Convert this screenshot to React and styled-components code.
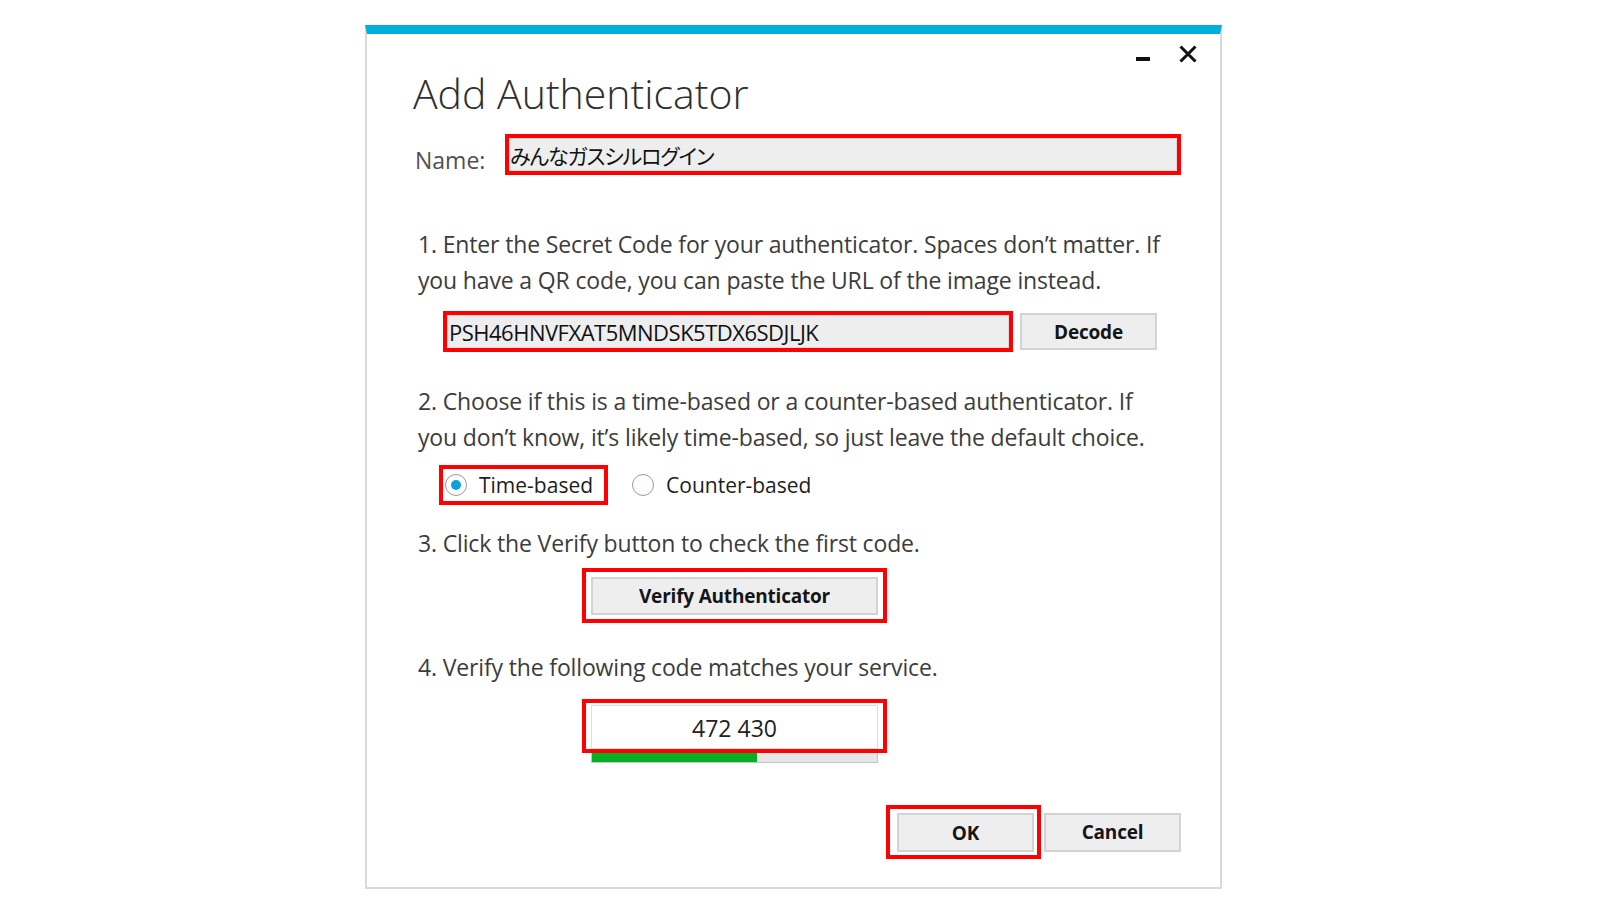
import React from 'react';
import styled, { createGlobalStyle } from 'styled-components';

const GlobalStyle = createGlobalStyle`
  html, body { margin: 0; padding: 0; background: #ffffff; }
  body { font-family: "Open Sans", "Noto Sans", sans-serif; color: #333; }
  * { box-sizing: border-box; }
`;

const Page = styled.div`
  width: 1600px;
  height: 900px;
  padding: 25px 0 0 365px;
  background: #ffffff;
`;

const Dialog = styled.section`
  width: 857px;
  border: 2px solid #d9d9d9;
  border-top: 9px solid #00aedd;
  background: #ffffff;
  padding-bottom: 28px;
`;

const TitleBar = styled.div`
  height: 35px;
  display: flex;
  justify-content: flex-end;
  align-items: flex-start;
  gap: 29px;
  padding: 11px 23px 0 0;
`;

const WindowButton = styled.button`
  padding: 0;
  margin: 0;
  border: none;
  background: transparent;
  display: block;
  line-height: 0;
  cursor: default;
`;

const Content = styled.div`
  display: flex;
  flex-direction: column;
  align-items: flex-start;
  padding: 0 39px 0 48px;
`;

const Title = styled.h1`
  margin: 0 0 0 -2px;
  font-family: "Open Sans", "Noto Sans", sans-serif;
  font-weight: 300;
  font-size: 41px;
  line-height: 48px;
  color: #2e2e2e;
`;

const NameRow = styled.div`
  display: flex;
  align-items: flex-start;
  align-self: stretch;
  margin-top: 17px;
`;

const NameLabel = styled.label`
  width: 90px;
  flex: none;
  margin-top: 11px;
  font-size: 23px;
  line-height: 30px;
  color: #505050;
`;

const Highlight = styled.div`
  display: flex;
  align-items: center;
  flex: ${p => (p.$grow ? '1' : 'none')};
  border: 4px solid #ff0000;
  padding: ${p => p.$pad || '0'};
`;

const TextField = styled.input`
  display: block;
  width: ${p => p.$w || '100%'};
  height: 33px;
  margin: 0;
  padding: 0 0 0 ${p => p.$indent || '2px'};
  border: 1px solid #dcdcdc;
  background: #eeeeee;
  color: #111;
  font-family: ${p => (p.$cjk ? '"Noto Sans CJK JP", sans-serif' : '"Open Sans", "Noto Sans", sans-serif')};
  font-feature-settings: ${p => (p.$cjk ? '"palt"' : 'normal')};
  font-size: ${p => p.$fs || '22px'};
  letter-spacing: ${p => p.$ls || '0'};
  outline: none;
`;

const Step = styled.p`
  margin: ${p => p.$mt || '0'} 0 0 3px;
  font-size: 23px;
  line-height: 36px;
  font-weight: 400;
  letter-spacing: -0.15px;
  color: #3c3c3c;
  white-space: nowrap;
`;

const SecretRow = styled.div`
  display: flex;
  align-items: center;
  gap: 7px;
  margin: 13px 0 0 28px;
`;

const Button = styled.button`
  width: ${p => p.$w}px;
  height: ${p => p.$h}px;
  margin: 0;
  padding: 0;
  background: #eeeeee;
  border: 2px solid #d3d3d3;
  font-family: "Open Sans", "Noto Sans", sans-serif;
  font-weight: 700;
  font-size: 19px;
  letter-spacing: -0.2px;
  color: #151515;
  cursor: default;
`;

const RadioRow = styled.div`
  display: flex;
  align-items: center;
  gap: 24px;
  margin: 10px 0 0 24px;
`;

const RadioOption = styled.label`
  display: flex;
  align-items: center;
  gap: 12px;
  height: 32px;
  font-size: 21px;
  color: #1e1e1e;
`;

const RadioCircle = styled.span`
  width: 22px;
  height: 22px;
  border-radius: 50%;
  border: 1.5px solid #9c9c9c;
  background: #fdfdfd;
  display: flex;
  align-items: center;
  justify-content: center;
  flex: none;
`;

const RadioDot = styled.span`
  width: 10px;
  height: 10px;
  border-radius: 50%;
  background: #0aa3d9;
`;

const Indented = styled.div`
  margin: ${p => p.$mt} 0 0 167px;
  display: flex;
  flex-direction: column;
  align-items: flex-start;
`;

const CodeField = styled.output`
  display: block;
  width: 287px;
  height: 44px;
  padding-top: 3px;
  border: 1px solid #dedede;
  background: #ffffff;
  text-align: center;
  font-size: 23px;
  line-height: 39px;
  color: #222;
`;

const ProgressTrack = styled.div`
  margin-left: 9px;
  width: 287px;
  height: 10px;
  background: #e6e6e6;
  border: 1px solid #c4c4c4;
  border-top: none;
  display: flex;
`;

const ProgressFill = styled.div`
  height: 100%;
  background: #06b025;
`;

const Footer = styled.div`
  align-self: stretch;
  display: flex;
  justify-content: flex-end;
  align-items: center;
  gap: 3px;
  margin-top: 42px;
`;

const MinimizeIcon = () => (
  <svg width="14" height="18" viewBox="0 0 14 18">
    <rect x="0" y="12" width="14" height="4" fill="#111" />
  </svg>
);

const CloseIcon = () => (
  <svg width="18" height="18" viewBox="0 0 18 18">
    <path d="M1.5 1.5 L16.5 16.5 M16.5 1.5 L1.5 16.5" stroke="#111" strokeWidth="3" fill="none" />
  </svg>
);

export default function App() {
  const progress = 58;
  return (
    <>
      <GlobalStyle />
      <Page>
        <Dialog>
          <TitleBar>
            <WindowButton aria-label="Minimize"><MinimizeIcon /></WindowButton>
            <WindowButton aria-label="Close"><CloseIcon /></WindowButton>
          </TitleBar>
          <Content>
            <Title>Add Authenticator</Title>
            <NameRow>
              <NameLabel>Name:</NameLabel>
              <Highlight $grow>
                <TextField $cjk $fs="21px" $ls="-1.1px" $indent="0px" readOnly value="みんなガスシルログイン" />
              </Highlight>
            </NameRow>

            <Step $mt="51px">
              1. Enter the Secret Code for your authenticator. Spaces don’t matter. If
              <br />
              you have a QR code, you can paste the URL of the image instead.
            </Step>

            <SecretRow>
              <Highlight>
                <TextField $w="562px" $ls="-0.5px" $indent="1px" readOnly value="PSH46HNVFXAT5MNDSK5TDX6SDJLJK" />
              </Highlight>
              <Button $w={137} $h={37}>Decode</Button>
            </SecretRow>

            <Step $mt="31px">
              2. Choose if this is a time-based or a counter-based authenticator. If
              <br />
              you don’t know, it’s likely time-based, so just leave the default choice.
            </Step>

            <RadioRow>
              <Highlight $pad="0 11px 0 2px">
                <RadioOption>
                  <RadioCircle><RadioDot /></RadioCircle>
                  Time-based
                </RadioOption>
              </Highlight>
              <RadioOption>
                <RadioCircle />
                Counter-based
              </RadioOption>
            </RadioRow>

            <Step $mt="20px">3. Click the Verify button to check the first code.</Step>

            <Indented $mt="7px">
              <Highlight $pad="5px 5px 4px 5px">
                <Button $w={287} $h={38}>Verify Authenticator</Button>
              </Highlight>
            </Indented>

            <Step $mt="26px">4. Verify the following code matches your service.</Step>

            <Indented $mt="14px">
              <Highlight $pad="2px 5px 0 5px">
                <CodeField>472 430</CodeField>
              </Highlight>
              <ProgressTrack>
                <ProgressFill style={{ width: `${progress}%` }} />
              </ProgressTrack>
            </Indented>

            <Footer>
              <Highlight $pad="4px 3px 3px 7px">
                <Button $w={137} $h={39}>OK</Button>
              </Highlight>
              <Button $w={137} $h={39}>Cancel</Button>
            </Footer>
          </Content>
        </Dialog>
      </Page>
    </>
  );
}
